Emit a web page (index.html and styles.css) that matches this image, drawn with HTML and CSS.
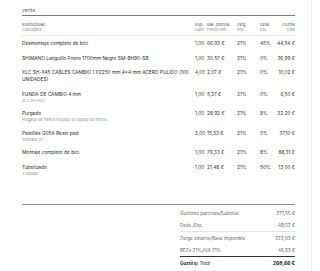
FILE: index.html
```html
<!DOCTYPE html>
<html lang="es">
<head>
<meta charset="utf-8">
<title>venta</title>
<link rel="stylesheet" href="styles.css">
</head>
<body>
<div class="paper">
  <div class="doc-title">venta</div>
  <div class="grid head">
    <div class="c-desc"><span>Kontzeptuak/</span><span class="alt">Conceptos</span></div>
    <div><span>Kop.</span><span class="alt">Cant.</span></div>
    <div><span>Bak. prezioa</span><span class="alt">Precio unit.</span></div>
    <div><span>Zerg.</span><span class="alt">Imp.</span></div>
    <div><span>Desk.</span><span class="alt">Dto.</span></div>
    <div class="c-total"><span>Guztira</span><span class="alt">Total</span></div>
  </div>
  <div class="items">
    <div class="grid row">
      <div class="c-desc"><span class="name">Desmontaje completo de bici</span></div>
      <div>1,00</div><div>66,93 €</div><div>21%</div><div>45%</div><div class="c-total">44,54 €</div>
    </div>
    <div class="grid row">
      <div class="c-desc"><span class="name">SHIMANO Latiguillo Freno 1700mm Negro SM-BH90-SB</span></div>
      <div>1,00</div><div>30,57 €</div><div>21%</div><div>0%</div><div class="c-total">36,99 €</div>
    </div>
    <div class="grid row">
      <div class="c-desc"><span class="name">XLC SH-X45 CABLES CAMBIO 1.1/2250 mm 4×4 mm ACERO PULIDO (100 UNIDADES)</span></div>
      <div>4,00</div><div>2,07 €</div><div>21%</div><div>0%</div><div class="c-total">10,02 €</div>
    </div>
    <div class="grid row">
      <div class="c-desc"><span class="name">FUNDA DE CAMBIO 4 mm</span><span class="sub">XLC SH-X03</span></div>
      <div>1,00</div><div>5,37 €</div><div>21%</div><div>0%</div><div class="c-total">6,50 €</div>
    </div>
    <div class="grid row">
      <div class="c-desc"><span class="name">Purgado</span><span class="sub">Purgado de frenos incluido el Liquido de frenos</span></div>
      <div>1,00</div><div>28,92 €</div><div>21%</div><div>8%</div><div class="c-total">32,20 €</div>
    </div>
    <div class="grid row">
      <div class="c-desc"><span class="name">Pastillas G05A Resin pad</span><span class="sub">Shimano XT</span></div>
      <div>2,00</div><div>15,33 €</div><div>21%</div><div>0%</div><div class="c-total">37,10 €</div>
    </div>
    <div class="grid row">
      <div class="c-desc"><span class="name">Montaje completo de bici</span></div>
      <div>1,00</div><div>79,33 €</div><div>21%</div><div>8%</div><div class="c-total">88,31 €</div>
    </div>
    <div class="grid row">
      <div class="c-desc"><span class="name">Tubelizado</span><span class="sub">2 ruedas</span></div>
      <div>1,00</div><div>21,48 €</div><div>21%</div><div>50%</div><div class="c-total">13,00 €</div>
    </div>
  </div>
  <div class="totals">
    <div class="t-row"><span>Guztizko partziala/Subtotal</span><span class="val">271,55 €</span></div>
    <div class="t-row"><span>Desk./Dto.</span><span class="val">-49,52 €</span></div>
    <div class="t-row sep"><span>Zerga oinarria/Base imponible</span><span class="val">222,03 €</span></div>
    <div class="t-row"><span>BEZa 21%/IVA 21%</span><span class="val">46,63 €</span></div>
    <div class="t-row grand"><span><b>Guztira/</b> <i>Total</i></span><span class="val">268,66 €</span></div>
  </div>
</div>
</body>
</html>
```
FILE: styles.css
```css
html, body {
  margin: 0;
  padding: 0;
  background: #ffffff;
}

body {
  font-family: Inter, "Liberation Sans", sans-serif;
  color: #333333;
}

.paper {
  box-sizing: border-box;
  width: 312px;
  height: 271px;
  padding: 0 16px 0 22px;
  border-right: 1px solid #ececec;
  overflow: hidden;
}

.doc-title {
  font-size: 5px;
  line-height: 7px;
  color: #666666;
  padding-top: 6.5px;
  padding-bottom: 1px;
  border-bottom: 1px solid #7a7a7a;
}

.grid {
  display: grid;
  grid-template-columns: 173px 12px 30px 23px 17px 1fr;
}

.grid > div {
  display: flex;
  flex-direction: column;
  white-space: nowrap;
}

.grid > .c-desc {
  white-space: normal;
  padding-right: 4px;
}

.grid > .c-total {
  align-items: flex-end;
  text-align: right;
}

.head {
  font-size: 3.8px;
  line-height: 5px;
  color: #555555;
  padding-top: 6.5px;
  padding-bottom: 2.5px;
  border-bottom: 1px solid #e6e6e6;
}

.head .alt {
  color: #8a8a8a;
}

.items {
  padding-top: 1px;
}

.row {
  font-size: 4.8px;
  line-height: 7px;
  padding: 3.75px 0;
  color: #333333;
}

.row .name {
  color: #2a2a2a;
}

.row .sub {
  font-size: 3.8px;
  line-height: 5px;
  color: #8f8f8f;
}

.totals {
  margin-top: 24px;
  border-top: 1px solid #8c8c8c;
  padding-top: 2.5px;
  padding-left: 158px;
  font-size: 4.6px;
  line-height: 7px;
  color: #666666;
}

.t-row {
  display: flex;
  justify-content: space-between;
  padding: 2.5px 0;
}

.t-row .val {
  color: #555555;
}

.t-row.sep {
  border-top: 1px solid #e4e4e4;
}

.t-row.grand {
  border-top: 1.5px solid #333333;
  color: #333333;
}

.t-row.grand b {
  font-weight: 700;
}

.t-row.grand .val {
  font-weight: 700;
  font-size: 5px;
  color: #222222;
}
```
